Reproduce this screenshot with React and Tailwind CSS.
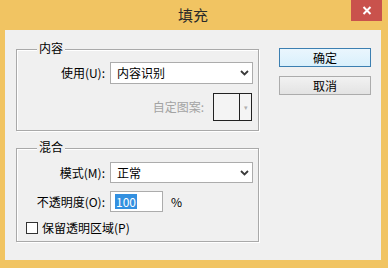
import React from "react";

const Chevron = () => (
  <svg width="9" height="6" viewBox="0 0 9 6" className="block">
    <path d="M1 1 L4.5 4.5 L8 1" fill="none" stroke="#3a3a3a" strokeWidth="1.8" />
  </svg>
);

export default function App() {
  return (
    <div
      className="w-[388px] h-[268px] bg-[#f1c462] overflow-hidden"
      style={{ fontFamily: '"Noto Sans CJK SC", "Noto Sans", sans-serif' }}
    >
      <div className="relative h-[30px] flex items-center justify-center">
        <span className="text-[15px] leading-[20px] text-[#2a2a2a] ml-[-2px]">填充</span>
        <div className="absolute right-[6px] top-0 w-[31px] h-[21px] bg-[#c9524c] flex items-center justify-center">
          <svg width="10" height="9" viewBox="0 0 10 9">
            <path d="M1.5 1 L8.5 8 M8.5 1 L1.5 8" stroke="#fff" strokeWidth="2" />
          </svg>
        </div>
      </div>
      <div className="ml-[5px] w-[376px] h-[230px] bg-[#f0f0f0] flex items-start pl-[11px] pt-[19px] text-[12px] leading-[16px] text-black">
        <div className="w-[243px] flex flex-col gap-[17px]">
          {/* 内容 */}
          <div className="relative h-[82px] border border-[#a9a9a9] shadow-[inset_1px_1px_0_#ffffff,1px_1px_0_#ffffff] pt-[12px] pr-[5px]">
            <span className="absolute left-[20px] top-[-10px] px-[2px] bg-[#f0f0f0] text-[12px] leading-[16px]">内容</span>
            <div className="flex items-center">
              <span className="w-[88px] text-right mr-[5px]">使用(U):</span>
              <div className="w-[143px] h-[22px] bg-white border border-[#acacac] flex items-center justify-between pl-[6px] pr-[3px]">
                <span>内容识别</span>
                <Chevron />
              </div>
            </div>
            <div className="flex items-center justify-end mt-[9px] pr-[1px]">
              <span className="text-[#a3a3a3] mr-[9px]">自定图案:</span>
              <div className="w-[39px] h-[28px] border border-[#222] flex bg-[#f4f4f4]">
                <div className="w-[26px] border-r border-[#222]"></div>
                <div className="flex-1 flex items-center justify-center">
                  <span className="text-[7px] leading-[7px] text-[#b0b0b0]">▾</span>
                </div>
              </div>
            </div>
          </div>
          {/* 混合 */}
          <div className="relative h-[94px] border border-[#a9a9a9] shadow-[inset_1px_1px_0_#ffffff,1px_1px_0_#ffffff] pt-[13px] pr-[5px]">
            <span className="absolute left-[20px] top-[-10px] px-[2px] bg-[#f0f0f0] text-[12px] leading-[16px]">混合</span>
            <div className="flex items-center">
              <span className="w-[88px] text-right mr-[5px]">模式(M):</span>
              <div className="w-[143px] h-[21px] bg-white border border-[#acacac] flex items-center justify-between pl-[6px] pr-[3px]">
                <span>正常</span>
                <Chevron />
              </div>
            </div>
            <div className="flex items-center mt-[8px]">
              <span className="w-[88px] text-right mr-[5px]">不透明度(O):</span>
              <div className="w-[53px] h-[21px] bg-white border border-[#acacac] flex items-center pl-[4px]">
                <span className="bg-[#3390e0] text-white px-[1px] leading-[15px]">100</span>
              </div>
              <span className="ml-[8px]">%</span>
            </div>
            <div className="flex items-center mt-[8px] ml-[9px]">
              <div className="w-[12px] h-[12px] bg-white border border-[#333]"></div>
              <span className="ml-[4px]">保留透明区域(P)</span>
            </div>
          </div>
        </div>
        <div className="ml-[20px] mt-[-1px] flex flex-col gap-[9px]">
          <div className="w-[92px] h-[19px] border border-[#3c7fb1] bg-gradient-to-b from-[#eaf6fd] to-[#d9f0fc] flex items-center justify-center">
            确定
          </div>
          <div className="w-[92px] h-[19px] border border-[#acacac] bg-gradient-to-b from-[#f2f2f2] to-[#e3e3e3] flex items-center justify-center">
            取消
          </div>
        </div>
      </div>
    </div>
  );
}
